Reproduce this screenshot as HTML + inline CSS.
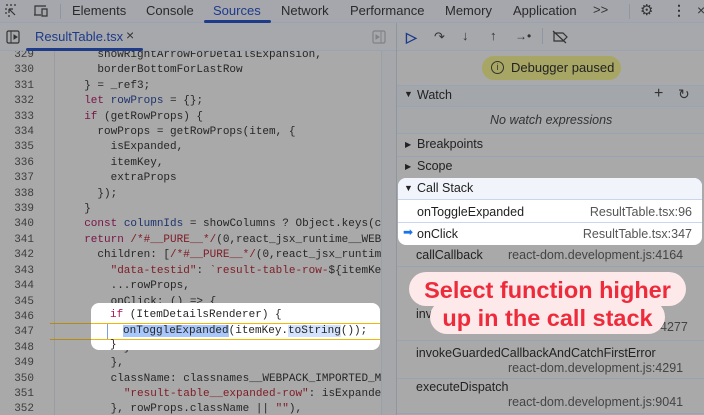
<!DOCTYPE html>
<html><head><meta charset="utf-8"><style>
*{margin:0;padding:0;box-sizing:border-box}
body{width:704px;height:415px;overflow:hidden;background:#a9a9aa;font-family:"Liberation Sans",sans-serif;position:relative;color:#222}
.a{position:absolute;white-space:nowrap}
.code{font-family:"Liberation Mono",monospace;font-size:11px;color:#262626}
.ln{color:#3c3c3c;width:34px;text-align:right;font-family:"Liberation Mono",monospace;font-size:11px}
.k{color:#781445}.v{color:#1d346e}.s{color:#7e1b24}
</style></head><body>
<!-- top bar -->
<div class="a" style="left:0;top:0;width:704px;height:23px;background:#a5a7ac;border-bottom:1px solid #9aa3b3"></div>
<svg class="a" style="left:5px;top:4px" width="14" height="14"><path d="M1 1h2M5 1h2M9 1h2M1 4v2M1 8v2M3 12h2M4 5l6 6M4 5v4M4 5h4" stroke="#333" stroke-width="1.2" fill="none"/></svg>
<svg class="a" style="left:33px;top:4px" width="17" height="14"><path d="M2 11V2h11M1 11h7M9 5h5v7H9z" stroke="#333" stroke-width="1.2" fill="none"/></svg>
<div class="a" style="left:60px;top:4px;width:1px;height:15px;background:#8e96a3"></div>
<div class="a" style="left:72px;top:3px;font-size:13px;color:#2a2a2a">Elements</div>
<div class="a" style="left:146px;top:3px;font-size:13px;color:#2a2a2a">Console</div>
<div class="a" style="left:213px;top:3px;font-size:13px;color:#1e3b8a">Sources</div>
<div class="a" style="left:204px;top:20px;width:67px;height:3px;background:#1e3b8a;border-radius:2px"></div>
<div class="a" style="left:281px;top:3px;font-size:13px;color:#2a2a2a">Network</div>
<div class="a" style="left:350px;top:3px;font-size:13px;color:#2a2a2a">Performance</div>
<div class="a" style="left:445px;top:3px;font-size:13px;color:#2a2a2a">Memory</div>
<div class="a" style="left:513px;top:3px;font-size:13px;color:#2a2a2a">Application</div>
<div class="a" style="left:593px;top:2px;font-size:13px;color:#333">&gt;&gt;</div>
<div class="a" style="left:629px;top:4px;width:1px;height:15px;background:#8e96a3"></div>
<div class="a" style="left:640px;top:1px;font-size:15px;color:#333">⚙</div>
<div class="a" style="left:672px;top:2px;font-size:14px;color:#333;font-weight:bold">⋮</div>
<div class="a" style="left:697px;top:2px;font-size:14px;color:#333">×</div>
<!-- editor tab bar -->
<div class="a" style="left:0;top:23px;width:396px;height:28px;background:#a7a8ab;border-bottom:1px solid #9aa3b3"></div>
<svg class="a" style="left:6px;top:30px" width="14" height="14"><rect x="1" y="1" width="12" height="12" rx="1.5" stroke="#333" stroke-width="1.2" fill="none"/><path d="M5 1v12M8 5l3 2-3 2z" stroke="#333" fill="#333"/></svg>
<div class="a" style="left:35px;top:29px;font-size:13px;color:#1e3b8a">ResultTable.tsx</div>
<div class="a" style="left:126px;top:27px;font-size:14px;color:#333">×</div>
<div class="a" style="left:26px;top:48px;width:117px;height:3px;background:#1e3b8a;border-radius:2px"></div>
<svg class="a" style="left:372px;top:30px" width="14" height="14"><rect x="1" y="1" width="12" height="12" rx="1.5" stroke="#7f8287" stroke-width="1.2" fill="none"/><path d="M9 1v12M4 5l3 2-3 2z" stroke="#7f8287" fill="#7f8287"/></svg>
<!-- code -->
<div class="a" style="left:54px;top:51px;width:1px;height:364px;background:#999da3"></div>
<div class="a" style="left:381px;top:51px;width:1px;height:364px;background:#9aa0a8"></div>
<div class="a" style="left:396px;top:23px;width:1px;height:392px;background:#8f96a2"></div>
<div class="a" style="left:382px;top:51px;width:14px;height:364px;background:#a6a7aa"></div>

<div class="a" style="left:0;top:51px;width:381px;height:364px;overflow:hidden">
<div class="a code" style="left:0;top:-3px;line-height:15.4px">
<div style="position:absolute;left:0"><div class="ln">329<br>330<br>331<br>332<br>333<br>334<br>335<br>336<br>337<br>338<br>339<br>340<br>341<br>342<br>343<br>344<br>345<br>346<br>347<br>348<br>349<br>350<br>351<br>352<br>353</div></div>
<div style="position:absolute;left:71px;white-space:pre">    showRightArrowForDetailsExpansion,
    borderBottomForLastRow
  } = _ref3;
  <span class="k">let</span> <span class="v">rowProps</span> = {};
  <span class="k">if</span> (getRowProps) {
    rowProps = getRowProps(item, {
      isExpanded,
      itemKey,
      extraProps
    });
  }
  <span class="k">const</span> <span class="v">columnIds</span> = showColumns ? Object.keys(col
  <span class="k">return</span> <span class="s">/*#__PURE__*/</span>(0,react_jsx_runtime__WEBPA
    children: [<span class="s">/*#__PURE__*/</span>(0,react_jsx_runtime_
      <span class="s">"data-testid"</span>: <span class="s">`result-table-row-</span>${itemKey}
      ...rowProps,
      onClick: () =&gt; {
        <span class="k">if</span> (ItemDetailsRenderer) {
          onToggleExpanded(itemKey.toString());
        }
      },
      className: classnames__WEBPACK_IMPORTED_MOD
        <span class="s">"result-table__expanded-row"</span>: isExpanded
      }, rowProps.className || <span class="s">""</span>),</div>
</div>
</div>
<!-- code highlight -->
<div class="a" style="left:50px;top:323px;width:42px;height:1px;background:#b58a10"></div>
<div class="a" style="left:50px;top:339px;width:42px;height:1px;background:#b58a10"></div>
<div class="a code" style="left:91px;top:303px;width:289px;height:47px;background:#fff;border-radius:8px;overflow:hidden">
<div style="position:absolute;left:0;top:20px;width:289px;height:1px;background:#f2b705"></div>
<div style="position:absolute;left:0;top:36px;width:289px;height:1px;background:#f2b705"></div>
<div style="position:absolute;left:16px;top:21px;width:1px;height:15px;background:#7aa0e0"></div>
<div style="position:absolute;left:19px;top:5px;line-height:15.4px;white-space:pre"><span style="color:#b0185e">if</span> (ItemDetailsRenderer) {</div>
<div style="position:absolute;left:32px;top:21px;line-height:15.4px;white-space:pre"><span style="background:#a8c7fa">onToggleExpanded</span>(itemKey.<span style="background:#d3e3fd">toString</span>());</div>
<div style="position:absolute;left:19px;top:35px;line-height:15.4px;white-space:pre">}</div>
</div>

<!-- right panel -->
<div class="a" style="left:397px;top:23px;width:307px;height:28px;border-bottom:1px solid #9aa3b3;background:#a6a8ac"></div>
<div class="a" style="left:406px;top:29px;font-size:14px;color:#1e3b8a;font-weight:bold">▷</div>
<div class="a" style="left:434px;top:29px;font-size:13px;color:#333">↷</div>
<div class="a" style="left:462px;top:28px;font-size:13px;color:#333">↓</div>
<div class="a" style="left:490px;top:28px;font-size:13px;color:#333">↑</div>
<div class="a" style="left:515px;top:29px;font-size:12px;color:#333">→•</div>
<div class="a" style="left:542px;top:28px;width:1px;height:16px;background:#8e96a3"></div>
<svg class="a" style="left:552px;top:30px" width="16" height="14"><path d="M2 3h9l4 4-4 4H2zM1 1l13 12" stroke="#333" stroke-width="1.2" fill="none"/></svg>
<div class="a" style="left:482px;top:56px;width:139px;height:24px;border-radius:12px;background:#a8a665;font-size:13px;color:#222;padding:4px 0 0 29px">Debugger paused</div>
<div class="a" style="left:491px;top:61px;width:13px;height:13px;border:1.3px solid #333;border-radius:50%;font-size:9px;text-align:center;line-height:11px;color:#333">i</div>
<div class="a" style="left:397px;top:85px;width:307px;height:22px;background:#a3a6ab;border-top:1px solid #9aa3b3;border-bottom:1px solid #9aa3b3"></div>
<div class="a" style="left:404px;top:89px;font-size:9px;color:#222">▼</div>
<div class="a" style="left:417px;top:88px;font-size:12.5px">Watch</div>
<div class="a" style="left:654px;top:85px;font-size:16px;color:#333">+</div>
<div class="a" style="left:678px;top:86px;font-size:14px;color:#333">↻</div>
<div class="a" style="left:397px;top:107px;width:307px;height:27px;background:#a7a8aa;border-bottom:1px solid #9aa3b3"></div>
<div class="a" style="left:490px;top:113px;font-size:12.5px;font-style:italic;color:#333">No watch expressions</div>
<div class="a" style="left:405px;top:140px;font-size:8px">▶</div>
<div class="a" style="left:417px;top:137px;font-size:12.5px">Breakpoints</div>
<div class="a" style="left:397px;top:156px;width:307px;height:1px;background:#9aa3b3"></div>
<div class="a" style="left:405px;top:162px;font-size:8px">▶</div>
<div class="a" style="left:417px;top:159px;font-size:12.5px">Scope</div>
<!-- call stack highlight -->
<div class="a" style="left:398px;top:178px;width:304px;height:67px;background:#fff;border-radius:8px;overflow:hidden">
<div style="position:absolute;left:0;top:0;width:304px;height:22px;background:#f1f4fb;border-bottom:1px solid #c8d6ef"></div>
<div style="position:absolute;left:6px;top:5px;font-size:9px;color:#222">▼</div>
<div style="position:absolute;left:19px;top:3px;font-size:12.5px;color:#1f1f1f">Call Stack</div>
<div style="position:absolute;left:19px;top:27px;font-size:12.5px;color:#1f1f1f">onToggleExpanded</div>
<div style="position:absolute;right:10px;top:27px;font-size:12.5px;color:#555">ResultTable.tsx:96</div>
<div style="position:absolute;left:0;top:44px;width:304px;height:1px;background:#c8d6ef"></div>
<div style="position:absolute;left:5px;top:47px;font-size:12px;color:#1a73e8">➡</div>
<div style="position:absolute;left:19px;top:49px;font-size:12.5px;color:#1f1f1f">onClick</div>
<div style="position:absolute;right:10px;top:49px;font-size:12.5px;color:#555">ResultTable.tsx:347</div>
</div>
<div class="a" style="left:416px;top:248px;font-size:12.5px">callCallback</div>
<div class="a" style="left:508px;top:248px;font-size:12.5px;color:#444">react-dom.development.js:4164</div>
<div class="a" style="left:397px;top:266px;width:307px;height:1px;background:#9aa3b3"></div>
<div class="a" style="left:416px;top:307px;font-size:12.5px">inv</div>
<div class="a" style="left:660px;top:320px;font-size:12.5px;color:#444">4277</div>
<div class="a" style="left:397px;top:340px;width:307px;height:1px;background:#9aa3b3"></div>
<div class="a" style="left:416px;top:346px;font-size:12.5px">invokeGuardedCallbackAndCatchFirstError</div>
<div class="a" style="left:508px;top:361px;font-size:12.5px;color:#444">react-dom.development.js:4291</div>
<div class="a" style="left:397px;top:378px;width:307px;height:1px;background:#9aa3b3"></div>
<div class="a" style="left:416px;top:380px;font-size:12.5px">executeDispatch</div>
<div class="a" style="left:508px;top:395px;font-size:12.5px;color:#444">react-dom.development.js:9041</div>
<div class="a" style="left:397px;top:413px;width:307px;height:1px;background:#9aa3b3"></div>
<!-- callout -->
<div class="a" style="left:409px;top:272px;width:277px;height:34px;background:#fde9ea;border-radius:17px"></div>
<div class="a" style="left:430px;top:300px;width:235px;height:34px;background:#fde9ea;border-radius:17px"></div>
<div class="a" style="left:409px;top:276px;width:277px;text-align:center;font-size:23.5px;font-weight:bold;color:#ee2b3b;line-height:28px">Select function higher<br>up in the call stack</div>
</body></html>
